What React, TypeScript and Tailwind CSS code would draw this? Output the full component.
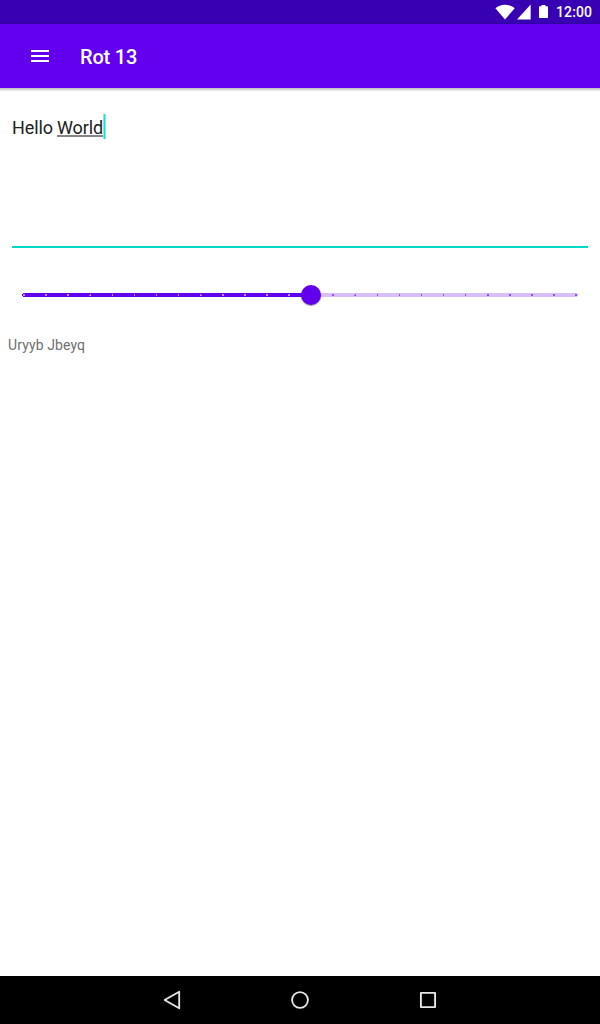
import React from "react";

const STEPS = 26;
const VALUE = 13;
const TRACK_START = 22;
const FIRST_TICK = 24;
const TICK_SPACING = 552 / (STEPS - 1);

function StatusBar() {
  return (
    <div className="flex h-6 shrink-0 items-center justify-end bg-[#3700b3] pr-2 text-white">
      <svg width="56" height="24" viewBox="0 0 56 24" fill="currentColor" aria-hidden="true">
        <path d="M3.4 8.3C6 6 9.3 4.8 13 4.8S20 6 22.7 8.3L13 19.5Z" />
        <path d="M38.7 4.6V19.5H25Z" />
        <path d="M49.500 5h4v1.200h1.700q.8 0 .8.8v10.200q0 .8-.8.8h-7.400q-.8 0-.8-.8V7q0-.8.8-.8h1.700Z" />
      </svg>
      <span className="ml-2 w-9 text-sm leading-6 font-medium tracking-[0.01em]">12:00</span>
    </div>
  );
}

function AppBar() {
  return (
    <header className="z-10 flex h-16 shrink-0 items-center bg-[#6200ee] pl-7 text-white shadow-[0_1px_2px_1px_rgba(0,0,0,0.25)]">
      <button aria-label="Menu" className="size-6">
        <svg width="24" height="24" viewBox="0 0 24 24" fill="currentColor">
          <path d="M3 18h18v-2H3v2zm0-5h18v-2H3v2zm0-7v2h18V6H3z" />
        </svg>
      </button>
      <h1 className="mt-0.5 ml-7 text-xl leading-6 font-medium tracking-[-0.01em]">Rot 13</h1>
    </header>
  );
}

function tickPath(index: number) {
  const center = FIRST_TICK + index * TICK_SPACING - TRACK_START;
  const x = Math.round(center) - 1;
  if ((index >= 4 && index <= 7) || (index >= 16 && index <= 20)) {
    return `M${Math.floor(center)} 1h1v2h-1z`;
  }
  if (index === 3 || index === 15) {
    return `M${x + 1} 1h1v2h-2v-1h1z`;
  }
  if (index === 8) {
    return `M${x} 1h1v1h1v1h-2z`;
  }
  return `M${x} 1h2v2h-2z`;
}

function Slider() {
  return (
    <div className="relative mx-[22px] mt-[45px] h-1">
      <svg className="block" width="556" height="4" viewBox="0 0 556 4" shapeRendering="crispEdges">
        <path d="M289 0h266v1h1v2h-1v1H289z" fill="#d8bffb" />
        <path d="M1 0h288v4H1V3H0V1h1z" fill="#6200ee" />
        {Array.from({ length: STEPS }, (_, i) => (
          <path key={i} d={tickPath(i)} fill={i <= VALUE ? "#c08cf7" : "#9450f0"} />
        ))}
      </svg>
      <div className="absolute -top-2 left-[279px] size-5 rounded-full bg-[#6200ee] shadow-[0_1px_1px_rgba(0,0,0,0.4)]" />
    </div>
  );
}

function NavigationBar() {
  return (
    <nav className="flex h-12 shrink-0 items-center justify-center gap-[104px] bg-black text-[#e8e8e8]">
      <svg width="24" height="24" viewBox="0 0 24 24" fill="none" stroke="currentColor" strokeWidth="1.8" strokeLinejoin="round">
        <path d="M19.200 3.700V20.300L4.600 12Z" />
      </svg>
      <svg width="24" height="24" viewBox="0 0 24 24" fill="none" stroke="currentColor" strokeWidth="1.8">
        <circle cx="12" cy="12" r="7.9" />
      </svg>
      <svg width="24" height="24" viewBox="0 0 24 24" fill="none" stroke="currentColor" strokeWidth="1.9" strokeLinejoin="round">
        <rect x="4.900" y="4.900" width="14.200" height="14.200" />
      </svg>
    </nav>
  );
}

export default function App() {
  return (
    <div className="flex h-screen w-full flex-col overflow-hidden bg-white font-['Roboto',sans-serif]">
      <StatusBar />
      <AppBar />
      <main className="flex-1">
        <div className="mx-3 flex h-40 items-start border-b-2 border-[#03dac5] pt-7 text-lg leading-6 tracking-[-0.005em] text-[#212121]">
          <span className="w-[45px] whitespace-pre">Hello </span>
          <span className="relative w-[46px]">
            World
            <span className="absolute bottom-[3px] left-0 h-0.5 w-full bg-[#858585]" />
          </span>
          <span className="-mt-0.5 h-[25px] w-[3px] bg-linear-to-r from-[#a6f2e9] via-[#1fdfcc] to-[#a6f2e9]" />
        </div>
        <Slider />
        <p className="mt-[38px] ml-2 text-sm leading-5 tracking-[0.008em] text-[#707070]">Uryyb Jbeyq</p>
      </main>
      <NavigationBar />
    </div>
  );
}
